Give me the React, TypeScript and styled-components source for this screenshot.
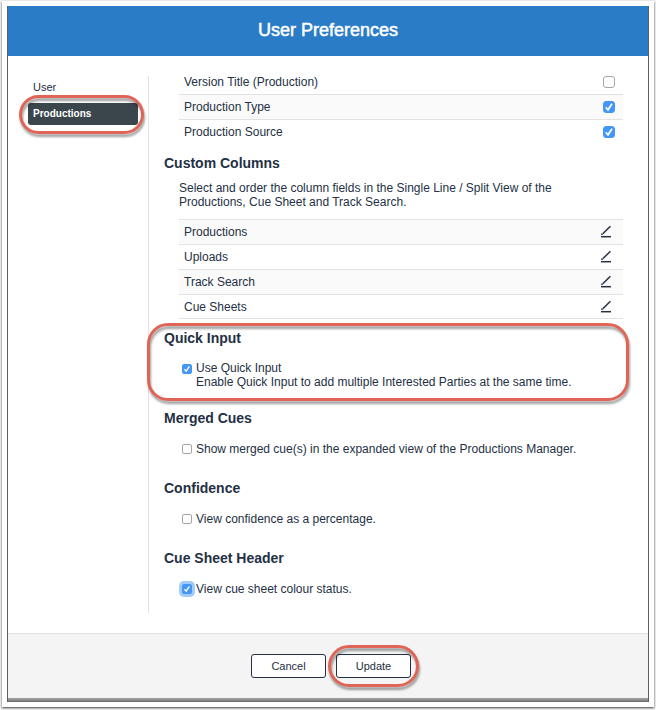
import React, { useState } from "react";
import styled, { createGlobalStyle, css } from "styled-components";

const ink = "#243044";
const line = "#e2e2e2";

const GlobalStyle = createGlobalStyle`
  *, *::before, *::after { box-sizing: border-box; }
  body {
    margin: 0;
    background: #f4f4f4;
    color: ${ink};
    font-family: "Liberation Sans", Arial, Helvetica, sans-serif;
    font-size: 12px;
    line-height: 14px;
  }
`;

const Frame = styled.div`
  margin: 1px 2px 3px;
  padding: 5px;
  background: #fff;
  box-shadow: 0 1px 2px rgba(0, 0, 0, 0.75);
`;

const Dialog = styled.main`
  border: solid #5e5e5e;
  border-width: 0 1px;
`;

const Header = styled.header`
  display: flex;
  align-items: center;
  justify-content: center;
  height: 50px;
  background: #2a7cc7;
`;

const Title = styled.h1`
  margin: 0;
  padding-bottom: 2px;
  color: #fff;
  font-size: 18px;
  line-height: 24px;
  font-weight: 400;
  -webkit-text-stroke: 0.5px #fff;
`;

const Body = styled.div`
  display: flex;
  padding: 20px 25px 20px 20px;
`;

const Sidebar = styled.nav`
  display: flex;
  flex-direction: column;
  width: 121px;
  flex: none;
  padding-right: 10px;
  border-right: 1px solid ${line};
`;

const callout = css`
  position: relative;

  &::after {
    content: "";
    position: absolute;
    border: 3px solid #e06556;
    filter: drop-shadow(1px 3px 1px rgba(0, 0, 0, 0.38));
    pointer-events: none;
  }
`;

const NavCallout = styled.div`
  ${callout}
  &::after {
    inset: -8px -6px -9px -9px;
    border-radius: 20px;
  }
`;

const NavLink = styled.a<{ $active?: boolean }>`
  display: block;
  height: 22px;
  padding: 0 5px;
  border-radius: 3px;
  font-size: ${(p) => (p.$active ? 10 : 11)}px;
  line-height: 22px;
  text-decoration: none;
  color: ${(p) => (p.$active ? "#fff" : ink)};
  background: ${(p) => (p.$active ? "#3a464c" : "transparent")};
  font-weight: ${(p) => (p.$active ? 700 : 400)};
`;

const NavList = styled.div`
  display: flex;
  flex-direction: column;
  gap: 5px;
`;

const Content = styled.div`
  flex: 1;
  min-width: 0;
  padding: 0 0 17px 15px;
`;

const Rows = styled.ul`
  margin: 0 0 0 15px;
  padding: 0;
  list-style: none;
`;

const Row = styled.li<{ $shaded?: boolean; $first?: boolean; $last?: boolean }>`
  display: flex;
  align-items: center;
  justify-content: space-between;
  height: ${(p) => (p.$first ? 18 : 25)}px;
  padding: ${(p) => (p.$first ? "0 8px 6px 5px" : "0 8px 0 5px")};
  border-top: ${(p) => (p.$first ? "none" : `1px solid ${line}`)};
  border-bottom: ${(p) => (p.$last ? `1px solid ${line}` : "none")};
  background: ${(p) => (p.$shaded ? "#fafafa" : "#fff")};
`;

const Tick = styled.input<{ $small?: boolean; $focused?: boolean }>`
  appearance: none;
  flex: none;
  width: ${(p) => (p.$small ? 10 : 12)}px;
  height: ${(p) => (p.$small ? 10 : 12)}px;
  margin: 0;
  border: 1px solid #a6a6a6;
  border-radius: ${(p) => (p.$small ? 2 : 3)}px;
  background: #fff;
  outline: none;
  box-shadow: ${(p) => (p.$focused ? "0 0 0 3px #a3cbfa" : "none")};

  &:checked {
    border-color: #4597f7;
    background: #4597f7
      url("data:image/svg+xml,%3Csvg xmlns='http://www.w3.org/2000/svg' viewBox='0 0 10 10'%3E%3Cpath d='M1.8 5.4 4 7.8 8 1.8' fill='none' stroke='white' stroke-width='1.7'/%3E%3C/svg%3E")
      center / 100% no-repeat;
  }
`;

const EditButton = styled.button`
  display: flex;
  margin: 0 3px 0 0;
  padding: 0;
  border: 0;
  background: none;
  color: ${ink};
`;

const Section = styled.section<{ $gap?: number }>`
  padding-top: ${(p) => p.$gap ?? 9}px;
`;

const HighlightedSection = styled(Section)`
  ${callout}
  &::after {
    inset: 4px -6px -12px -17px;
    border-radius: 21px;
  }
`;

const Heading = styled.h2`
  margin: 0;
  font-size: 14px;
  line-height: 20px;
  font-weight: 700;
`;

const Description = styled.p`
  max-width: 400px;
  margin: 8px 0 10px 15px;
`;

const Option = styled.label<{ $tight?: boolean }>`
  display: flex;
  align-items: flex-start;
  gap: 4px;
  margin: ${(p) => (p.$tight ? 13 : 14)}px 0 0 18px;

  ${Tick} {
    margin-top: ${(p) => (p.$tight ? 3 : 2)}px;
  }
`;

const Footer = styled.footer`
  display: flex;
  justify-content: center;
  gap: 10px;
  padding: 20px 0 20px 6px;
  border-top: 1px solid ${line};
  background: #f4f4f4;
`;

const BottomEdge = styled.div`
  height: 4px;
  background: linear-gradient(#a0a0a0, #8f8f8f 50%, #626262);
`;

const Button = styled.button`
  width: 75px;
  height: 24px;
  padding: 0;
  border: 1px solid ${ink};
  border-radius: 3px;
  background: #fff;
  color: ${ink};
  font: 11px/14px "Liberation Sans", Arial, sans-serif;
`;

const ButtonCallout = styled.div`
  ${callout}
  display: flex;
  &::after {
    inset: -9px -8px;
    border-radius: 21px;
  }
`;

const PencilIcon = () => (
  <svg width="12" height="14" viewBox="0 0 12 14" fill="none" stroke="currentColor" aria-hidden="true">
    <path d="M10.4 1.2 2.8 8.8" strokeWidth="1.5" />
    <path d="M1 10.2 1.7 8 3.3 9.4Z" fill="currentColor" stroke="none" />
    <path d="M1 11.7H11" strokeWidth="1.5" />
  </svg>
);

type CheckProps = {
  initial?: boolean;
  small?: boolean;
  focused?: boolean;
  id?: string;
};

const Check = ({ initial = false, small, focused, id }: CheckProps) => {
  const [checked, setChecked] = useState(initial);
  return (
    <Tick
      id={id}
      type="checkbox"
      checked={checked}
      onChange={(e) => setChecked(e.target.checked)}
      $small={small}
      $focused={focused}
    />
  );
};

const fields = [
  { id: "version-title", label: "Version Title (Production)", on: false },
  { id: "production-type", label: "Production Type", on: true },
  { id: "production-source", label: "Production Source", on: true },
];

const columns = ["Productions", "Uploads", "Track Search", "Cue Sheets"];

export default function App() {
  return (
    <>
      <GlobalStyle />
      <Frame>
        <Dialog>
          <Header>
            <Title>User Preferences</Title>
          </Header>
          <Body>
            <Sidebar aria-label="Preferences">
              <NavList>
                <NavLink href="#user">User</NavLink>
                <NavCallout>
                  <NavLink href="#productions" $active aria-current="page">
                    Productions
                  </NavLink>
                </NavCallout>
              </NavList>
            </Sidebar>
            <Content>
              <Rows>
                {fields.map((f, i) => (
                  <Row key={f.id} $first={i === 0} $shaded={i === 1}>
                    <label htmlFor={f.id}>{f.label}</label>
                    <Check id={f.id} initial={f.on} />
                  </Row>
                ))}
              </Rows>
              <Section>
                <Heading>Custom Columns</Heading>
                <Description>
                  Select and order the column fields in the Single Line / Split View of the Productions, Cue Sheet and
                  Track Search.
                </Description>
                <Rows>
                  {columns.map((name, i) => (
                    <Row key={name} $shaded={i % 2 === 0} $last={i === columns.length - 1}>
                      <span>{name}</span>
                      <EditButton type="button" aria-label={`Edit ${name}`}>
                        <PencilIcon />
                      </EditButton>
                    </Row>
                  ))}
                </Rows>
              </Section>
              <HighlightedSection>
                <Heading>Quick Input</Heading>
                <Option $tight>
                  <Check small initial />
                  <span>
                    Use Quick Input
                    <br />
                    Enable Quick Input to add multiple Interested Parties at the same time.
                  </span>
                </Option>
              </HighlightedSection>
              <Section $gap={19}>
                <Heading>Merged Cues</Heading>
                <Option>
                  <Check small />
                  <span>Show merged cue(s) in the expanded view of the Productions Manager.</span>
                </Option>
              </Section>
              <Section $gap={22}>
                <Heading>Confidence</Heading>
                <Option>
                  <Check small />
                  <span>View confidence as a percentage.</span>
                </Option>
              </Section>
              <Section $gap={22}>
                <Heading>Cue Sheet Header</Heading>
                <Option>
                  <Check small initial focused />
                  <span>View cue sheet colour status.</span>
                </Option>
              </Section>
            </Content>
          </Body>
          <Footer>
            <Button type="button">Cancel</Button>
            <ButtonCallout>
              <Button type="submit">Update</Button>
            </ButtonCallout>
          </Footer>
          <BottomEdge />
        </Dialog>
      </Frame>
    </>
  );
}
